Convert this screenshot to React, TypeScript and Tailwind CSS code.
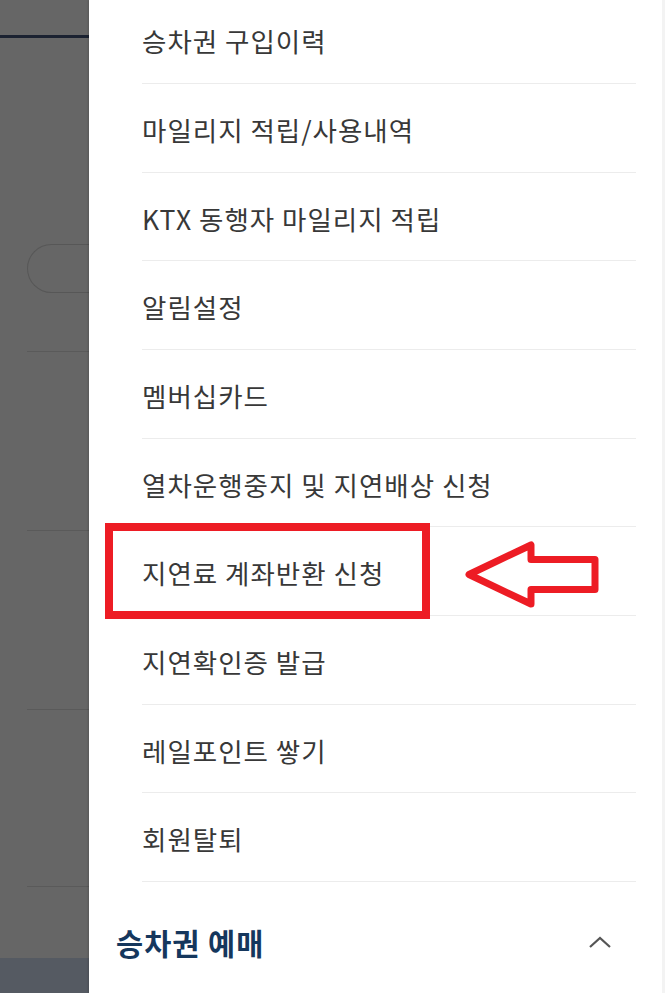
import React from "react";

const items = [
  "승차권 구입이력",
  "마일리지 적립/사용내역",
  "KTX 동행자 마일리지 적립",
  "알림설정",
  "멤버십카드",
  "열차운행중지 및 지연배상 신청",
  "지연료 계좌반환 신청",
  "지연확인증 발급",
  "레일포인트 쌓기",
  "회원탈퇴",
];

function Backdrop() {
  // dimmed page behind the drawer
  return (
    <div className="w-[89px] shrink-0 bg-[#666666] flex flex-col">
      <div className="mt-[35px] h-[3px] bg-[#1b2231]" />
      <div className="mt-[206px] ml-[27px] h-[49px] rounded-l-full border border-r-0 border-[#575757]" />
      <div className="mt-[58px] ml-[27px] h-px bg-[#5a5a5a]" />
      <div className="mt-[178px] ml-[27px] h-px bg-[#5a5a5a]" />
      <div className="mt-[178px] ml-[27px] h-px bg-[#5a5a5a]" />
      <div className="mt-[176px] ml-[27px] h-px bg-[#5a5a5a]" />
      <div className="mt-auto h-[35px] bg-[#555a62]" />
    </div>
  );
}

export default function App() {
  return (
    <div
      className="relative flex h-[993px] w-[665px] overflow-hidden bg-white"
      style={{ fontFamily: '"Noto Sans CJK KR", "Noto Sans", sans-serif' }}
    >
      <Backdrop />
      <div className="flex-1 flex flex-col bg-white border-r-[3px] border-[#f3f3f3] shadow-[-1px_0_2px_rgba(0,0,0,0.15)]">
        <ul className="-mt-[4.67px] ml-[53px] mr-[26px]">
          {items.map((label) => (
            <li
              key={label}
              className="h-[88.67px] flex items-center pt-[4px] border-b border-[#ececec] text-[26.5px] tracking-[1px] text-[#383838]"
            >
              {label}
            </li>
          ))}
        </ul>
        <div className="h-[120px] shrink-0 flex items-center justify-between pl-[27px] pr-[50px]">
          <span className="text-[29.5px] tracking-[1px] font-bold text-[#15375d]">승차권 예매</span>
          <svg width="24" height="14" viewBox="0 0 24 14" fill="none">
            <path d="M2 12L12 3L22 12" stroke="#555" strokeWidth="2.2" />
          </svg>
        </div>
      </div>

      {/* annotation overlay */}
      <div className="absolute left-[105px] top-[523px] w-[325px] h-[96px] border-[8px] border-[#ed1c24]" />
      <svg
        className="absolute left-[455px] top-[535px]"
        width="150"
        height="80"
        viewBox="0 0 150 80"
        fill="none"
      >
        <polygon
          points="14,39.5 76,10 76,24.5 140,24.5 140,54.5 76,54.5 76,69"
          stroke="#ed1c24"
          strokeWidth="7"
          strokeLinejoin="round"
        />
      </svg>
    </div>
  );
}
